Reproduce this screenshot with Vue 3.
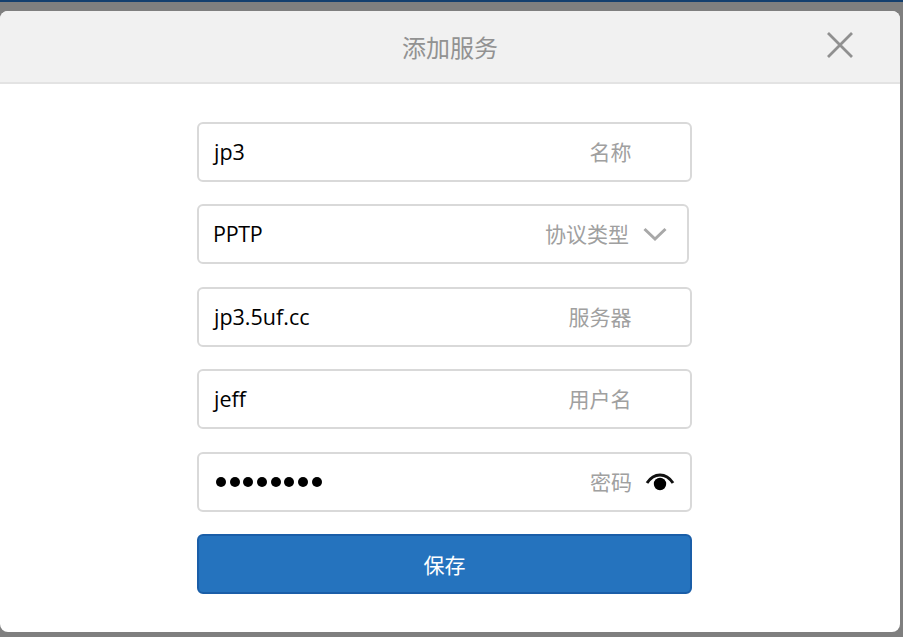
<template>
  <div class="page">
    <div class="top-strip"></div>
    <div class="dialog">
      <header class="dialog-header">
        <h1 class="dialog-title">添加服务</h1>
        <button class="close-btn" type="button" aria-label="关闭">
          <svg width="28" height="28" viewBox="0 0 28 28">
            <path d="M2 2 L26 26 M26 2 L2 26" stroke="#909090" stroke-width="2.8" fill="none" />
          </svg>
        </button>
      </header>

      <form class="form" @submit.prevent>
        <div class="field">
          <span class="value">jp3</span>
          <span class="label">名称</span>
        </div>

        <div class="field field-select">
          <span class="value">PPTP</span>
          <span class="label">协议类型</span>
          <svg class="chevron" width="24" height="16" viewBox="0 0 24 16">
            <path d="M1.5 3 L12 13 L22.5 3" stroke="#a8a8a8" stroke-width="3" fill="none" />
          </svg>
        </div>

        <div class="field">
          <span class="value">jp3.5uf.cc</span>
          <span class="label">服务器</span>
        </div>

        <div class="field">
          <span class="value">jeff</span>
          <span class="label">用户名</span>
        </div>

        <div class="field field-password">
          <span class="dots">
            <i v-for="n in 8" :key="n" class="dot"></i>
          </span>
          <span class="label">密码</span>
          <svg class="eye" width="30" height="20" viewBox="0 0 30 20">
            <path d="M2 11 C6 5 10 3 15 3 C20 3 24 5 28 11" stroke="#111" stroke-width="3" fill="none" />
            <circle cx="15" cy="12" r="6.2" fill="#000" />
          </svg>
        </div>

        <button class="save-btn" type="submit">保存</button>
      </form>
    </div>
  </div>
</template>

<script setup>
</script>

<style>
html,
body {
  margin: 0;
  background: #7f7f7f;
}
</style>

<style scoped>
.page {
  width: 903px;
  height: 637px;
  overflow: hidden;
  background: #7f7f7f;
  font-family: "Open Sans", "Noto Sans CJK SC", sans-serif;
}
.top-strip {
  height: 2px;
  background: #143f6e;
}
.dialog {
  width: 900px;
  height: 621px;
  margin-top: 9px;
  background: #fff;
  border-radius: 8px;
  overflow: hidden;
}
.dialog-header {
  position: relative;
  height: 71px;
  display: flex;
  align-items: center;
  justify-content: center;
  background: #f1f1f1;
  border-bottom: 2px solid #e3e3e3;
}
.dialog-title {
  margin: 0;
  font-size: 24px;
  font-weight: 400;
  color: #929292;
}
.close-btn {
  position: absolute;
  right: 46px;
  top: 20px;
  width: 28px;
  height: 28px;
  padding: 0;
  border: 0;
  background: none;
}
.form {
  width: 495px;
  margin-left: 197px;
  padding-top: 38px;
  display: flex;
  flex-direction: column;
  gap: 22.4px;
}
.field {
  box-sizing: border-box;
  height: 60px;
  display: flex;
  align-items: center;
  padding: 0 58.5px 0 15px;
  background: #fff;
  border: 2px solid #d9d9d9;
  border-radius: 6px;
}
.field-select {
  width: 492px;
  padding-right: 20px;
}
.field-password {
  padding-right: 15px;
}
.value {
  flex: 1;
  font-size: 21.5px;
  line-height: 28px;
  color: #000;
}
.field-select .value {
  margin-left: -1px;
  letter-spacing: -0.3px;
}
.label {
  font-size: 21px;
  margin-top: -2px;
  color: #a0a0a0;
}
.chevron {
  margin-left: 14px;
}
.dots {
  flex: 1;
  display: flex;
  gap: 3.7px;
  padding-left: 2px;
  margin-top: 1px;
}
.dot {
  width: 10px;
  height: 10px;
  border-radius: 50%;
  background: #000;
}
.eye {
  margin-left: 13px;
}
.save-btn {
  height: 60px;
  padding: 0;
  background: #2573be;
  border: 2px solid #1a5ea8;
  border-radius: 6px;
  color: #fff;
  font-family: inherit;
  font-size: 21px;
}
</style>
